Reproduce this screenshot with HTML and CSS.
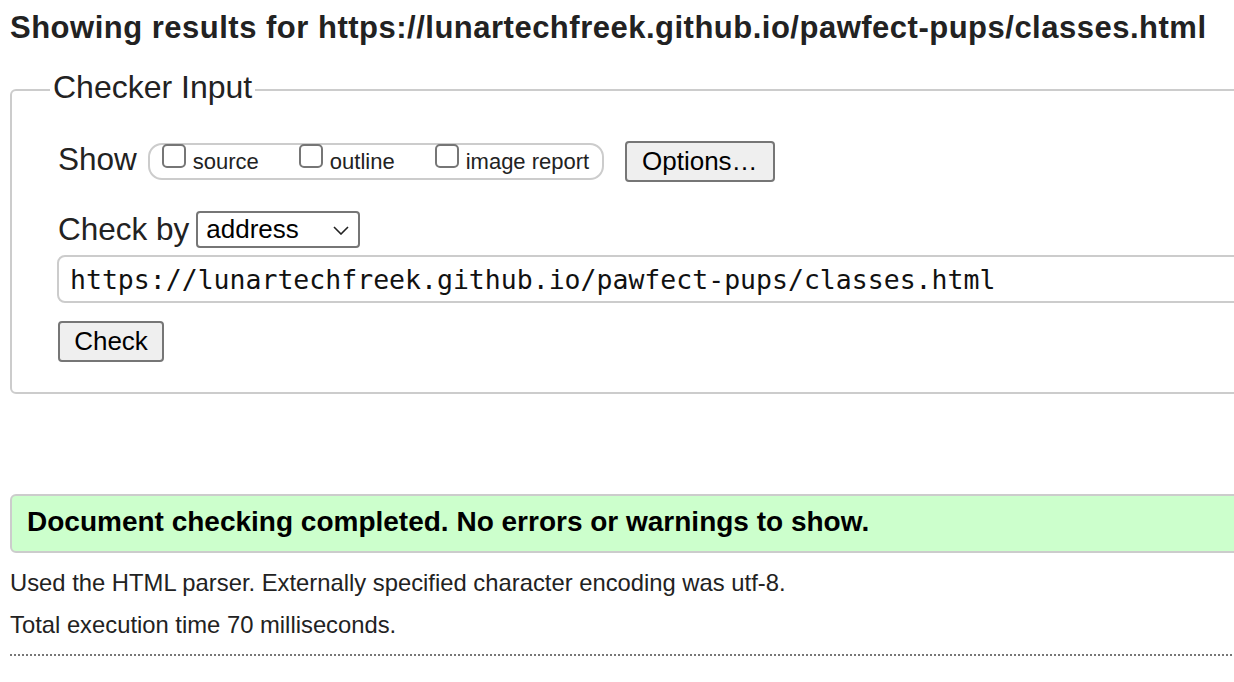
FILE: index.html
```html
<!DOCTYPE html>
<html lang="en">
<head>
<meta charset="utf-8">
<title>Showing results for https://lunartechfreek.github.io/pawfect-pups/classes.html - Nu Html Checker</title>
<link rel="stylesheet" href="styles.css">
</head>
<body>
<h2 class="title">Showing results for https://lunartechfreek.github.io/pawfect-pups/classes.html</h2>
<form class="checker">
  <fieldset class="input-box">
    <legend class="input-legend">Checker Input</legend>
    <div class="row row-show">
      <span class="row-label">Show</span>
      <fieldset class="show-group">
        <label class="opt"><input type="checkbox" class="cb"><span class="opt-text">source</span></label>
        <label class="opt"><input type="checkbox" class="cb"><span class="opt-text">outline</span></label>
        <label class="opt"><input type="checkbox" class="cb"><span class="opt-text">image report</span></label>
      </fieldset>
      <button type="button" class="btn btn-options">Options…</button>
    </div>
    <div class="row row-by">
      <span class="row-label">Check by</span>
      <div class="select">
        <span class="select-text">address</span>
        <svg class="chev" width="16" height="9" viewBox="0 0 16 9"><path d="M1 1 L8 8 L15 1" fill="none" stroke="#222" stroke-width="1.6"/></svg>
      </div>
    </div>
    <input class="url" type="text" value="https://lunartechfreek.github.io/pawfect-pups/classes.html">
    <div class="row row-check">
      <button type="button" class="btn btn-check">Check</button>
    </div>
  </fieldset>
</form>
<p class="success">Document checking completed. No errors or warnings to show.</p>
<p class="details">Used the HTML parser. Externally specified character encoding was utf-8.</p>
<p class="details">Total execution time 70 milliseconds.</p>
<hr class="dotted">
</body>
</html>
```

FILE: styles.css
```css
html {
  overflow: hidden;
}
body {
  margin: 0;
  padding: 11px 0 0 10px;
  font-family: "Liberation Sans", Arial, sans-serif;
  color: #222;
  background: #fff;
  width: 1400px;
}
.title {
  margin: 0;
  font-size: 31px;
  letter-spacing: 0.5px;
  line-height: 34px;
  font-weight: bold;
  color: #222;
  white-space: nowrap;
}
.checker {
  margin: 0;
}
.input-box {
  margin: 24px 0 0 0;
  width: 1330px;
  box-sizing: border-box;
  border: 2px solid #ccc;
  border-radius: 6px;
  padding: 29px 0 30px 38px;
  min-width: 0;
}
.input-legend {
  font-size: 32px;
  line-height: 36px;
  padding: 0 3px 6px 3px;
  color: #222;
}
.row {
  display: flex;
  align-items: flex-start;
  padding-left: 8px;
}
.row-show {
  height: 42px;
}
.row-label {
  font-size: 31.5px;
  line-height: 36px;
  white-space: nowrap;
}
.row-show .row-label {
  margin-top: 1px;
}
.show-group {
  display: flex;
  align-items: flex-start;
  margin: 3px 0 0 11px;
  width: 456px;
  height: 37px;
  box-sizing: border-box;
  border: 2px solid #ccc;
  border-radius: 14px;
  padding: 0 11px 0 12px;
  min-width: 0;
  gap: 40px;
}
.opt {
  display: flex;
  align-items: flex-start;
  gap: 7px;
  white-space: nowrap;
}
.cb {
  appearance: none;
  -webkit-appearance: none;
  margin: -1px 0 0 0;
  width: 24px;
  height: 24px;
  box-sizing: border-box;
  border: 2px solid #767676;
  border-radius: 5px;
  background: #fff;
}
.opt-text {
  font-size: 22px;
  line-height: 26px;
  margin-top: 4px;
}
.btn {
  font-family: "Liberation Sans", Arial, sans-serif;
  font-size: 26px;
  color: #000;
  background: #efefef;
  border: 2px solid #767676;
  border-radius: 4px;
  box-sizing: border-box;
  height: 41px;
  padding: 0;
  line-height: 37px;
}
.btn-options {
  margin: 1px 0 0 21px;
  width: 150px;
}
.row-by {
  margin-top: 29px;
  height: 37px;
}
.select {
  margin-left: 7px;
  width: 164px;
  height: 37px;
  box-sizing: border-box;
  border: 2px solid #767676;
  border-radius: 4px;
  display: flex;
  align-items: center;
  justify-content: space-between;
  padding: 0 9px 0 8px;
  background: #fff;
}
.select-text {
  font-size: 26px;
  line-height: 33px;
  color: #000;
}
.chev {
  display: block;
  margin-top: 2px;
}
.url {
  display: block;
  margin: 7px 0 0 7px;
  width: 1300px;
  height: 48px;
  box-sizing: border-box;
  border: 2px solid #ccc;
  border-radius: 8px;
  padding: 0 11px;
  font-family: "DejaVu Sans Mono", "Liberation Mono", monospace;
  font-size: 26.5px;
  color: #111;
  background: #fff;
  outline: none;
}
.row-check {
  margin-top: 18px;
}
.btn-check {
  width: 106px;
}
.success {
  margin: 100px 0 0 0;
  width: 1330px;
  box-sizing: border-box;
  height: 59px;
  border: 2px solid #ccc;
  border-radius: 6px;
  background: #ccffcc;
  padding: 0 0 4px 15px;
  font-size: 28px;
  line-height: 51px;
  font-weight: bold;
  color: #000;
  white-space: nowrap;
}
.details {
  margin: 0;
  font-size: 23.8px;
  line-height: 42px;
  white-space: nowrap;
}
.success + .details {
  margin-top: 9px;
}
.dotted {
  margin: 8px 0 0 0;
  width: 1330px;
  height: 0;
  border: 0;
  border-top: 2px dotted #777;
}
```
